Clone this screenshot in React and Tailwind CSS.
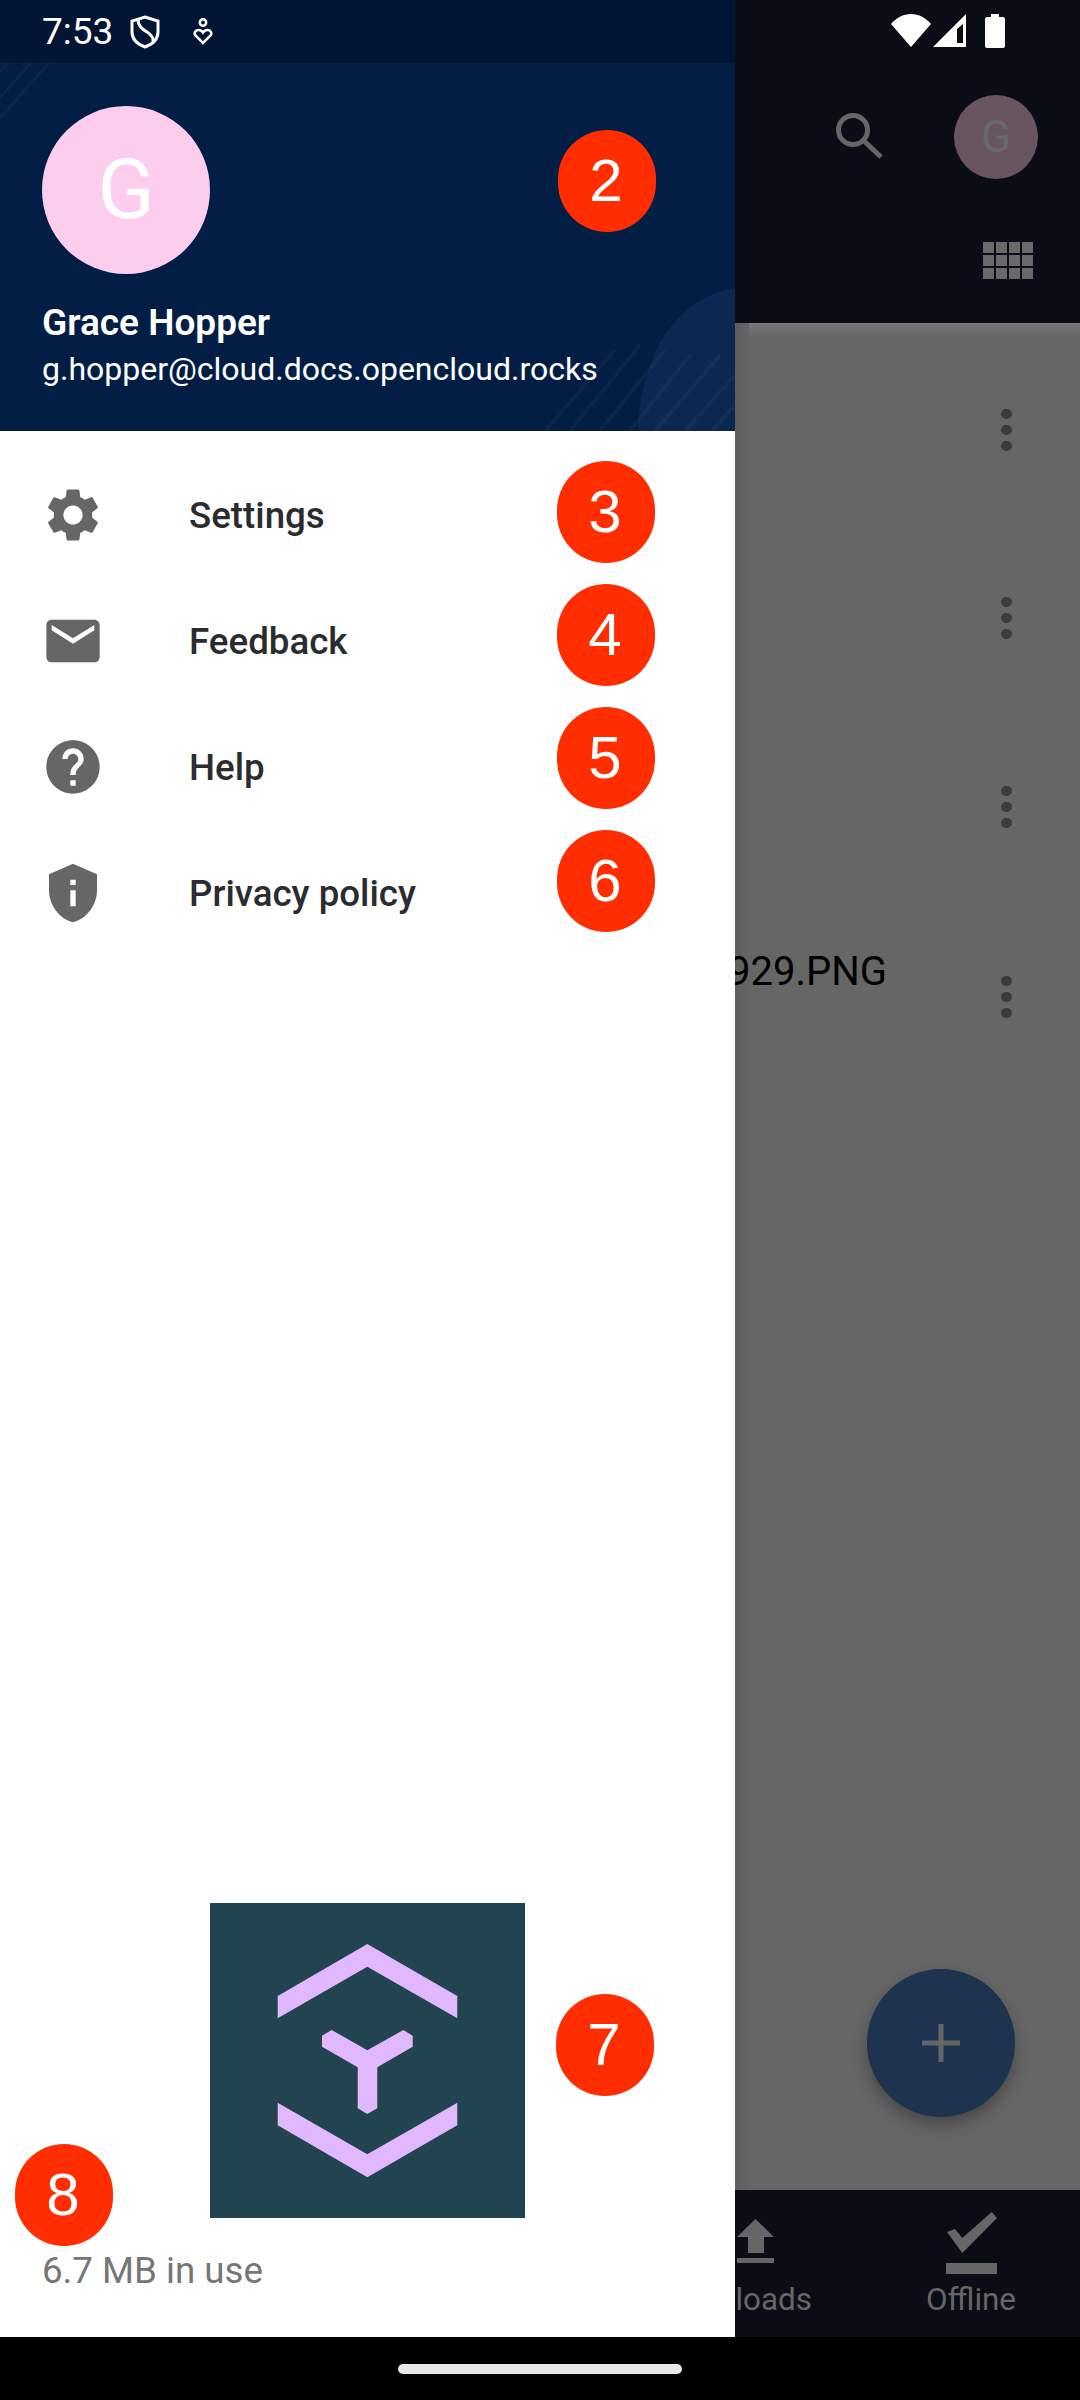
import React from "react";

const font = "font-['Roboto',sans-serif]";

const Badge = ({ n, className }) => (
  <div
    className={`absolute flex h-[102px] w-[98px] items-center justify-center rounded-full bg-[#ff2d00] text-[60px] text-white font-['Liberation_Sans',sans-serif] ${className}`}
  >
    <span className="-ml-[2px]">{n}</span>
  </div>
);

const MenuRow = ({ label, children }) => (
  <div className="flex h-[126px] items-center">
    <div className="ml-[37px] flex h-[72px] w-[72px] items-center justify-center">{children}</div>
    <span className="ml-[80px] mt-[2px] text-[36.7px] font-medium text-[#2a2c2f]">{label}</span>
  </div>
);

const Logo = () => (
  <svg width="315" height="315" viewBox="0 0 315 315" className="block">
    <rect width="315" height="315" fill="#224350" />
    <path fill="#e2b8fc" d="M157.3 41L247.3 93V115.3L157.3 63.7L67.7 115.3V93Z" />
    <path fill="#e2b8fc" d="M67.7 199.7L157.3 251.3L247.3 199.7V222.3L157.3 274.3L67.7 222.3Z" />
    <path
      fill="#e2b8fc"
      d="M121.7 127L157.3 147.3L193.3 127L202.7 132.7V143.7L167.3 164.3V205.3L157.3 211L147.7 205.3V164.3L112 143.7V132.7Z"
    />
  </svg>
);

const Kebab = () => (
  <div className="flex h-[42px] w-[11px] flex-col justify-between">
    <div className="h-[10px] w-[11px] rounded-full bg-[#3c3c3c]" />
    <div className="h-[10px] w-[11px] rounded-full bg-[#3c3c3c]" />
    <div className="h-[10px] w-[11px] rounded-full bg-[#3c3c3c]" />
  </div>
);

const Drawer = () => (
  <div className="relative flex w-[735px] flex-col bg-white">
    {/* Header */}
    <div className="relative h-[431px] overflow-hidden bg-[#031e45]">
      <svg width="735" height="431" viewBox="0 0 735 431" className="absolute left-0 top-0">
        <path
          d="M0 30L26 0M0 50L44 0M0 72L62 0M0 98L72 16M0 118L50 62"
          stroke="#ffffff"
          strokeOpacity="0.035"
          strokeWidth="3"
        />
        <path d="M638 431C640 370 665 300 735 288V431Z" fill="#0a2851" />
        <path
          d="M545 431L615 350M570 431L640 345M600 431L665 350M630 431L690 355M655 431L720 355M685 431L735 375M712 431L735 405"
          stroke="#ffffff"
          strokeOpacity="0.035"
          strokeWidth="4"
        />
      </svg>
      <div className="relative flex h-[63px] items-center bg-[#021433]/90 pl-[42px] text-white">
        <span className="text-[37px] leading-none">7:53</span>
        <svg width="30" height="34" viewBox="0 0 30 34" className="ml-[17px]" fill="none" stroke="#fff" strokeWidth="3">
          <path d="M15 2L28 6V17C28 25 23 29 15 32C7 29 2 25 2 17V6Z" />
          <path d="M8 4C8 11 12 14 17 17C22 20 24 23 23 28" />
        </svg>
        <svg width="20" height="27" viewBox="0 0 20 27" className="ml-[33px]" fill="none" stroke="#fff" strokeWidth="2.5">
          <circle cx="10" cy="4.5" r="3.2" />
          <path d="M10 25L2.5 17.5C0.5 15 2.5 12 5.5 12C7.5 12 9 13 10 14.5C11 13 12.5 12 14.5 12C17.5 12 19.5 15 17.5 17.5Z" />
        </svg>
      </div>
      <div className="relative ml-[42px] mt-[43px] flex h-[168px] w-[168px] items-center justify-center rounded-full bg-[#fdcdee] text-[84px] text-white">
        G
      </div>
      <div className="relative ml-[42px] mt-[27px] text-[37px] font-semibold leading-[44px] text-white">Grace Hopper</div>
      <div className="relative ml-[42px] mt-[4px] text-[32px] leading-[40px] text-white">g.hopper@cloud.docs.opencloud.rocks</div>
    </div>

    {/* Menu */}
    <div className="pt-[21px]">
      <MenuRow label="Settings">
        <svg width="64" height="64" viewBox="0 0 24 24" fill="#666666">
          <path d="M19.14 12.94c.04-.3.06-.61.06-.94 0-.32-.02-.64-.07-.94l2.03-1.58a.49.49 0 0 0 .12-.61l-1.92-3.32a.488.488 0 0 0-.59-.22l-2.39.96c-.5-.38-1.03-.7-1.62-.94l-.36-2.54a.484.484 0 0 0-.48-.41h-3.84c-.24 0-.43.17-.47.41l-.36 2.54c-.59.24-1.13.57-1.62.94l-2.39-.96c-.22-.08-.47 0-.59.22L2.74 8.87c-.12.21-.08.47.12.61l2.03 1.58c-.05.3-.09.63-.09.94s.02.64.07.94l-2.03 1.58a.49.49 0 0 0-.12.61l1.92 3.32c.12.22.37.29.59.22l2.39-.96c.5.38 1.03.7 1.62.94l.36 2.54c.05.24.24.41.48.41h3.84c.24 0 .44-.17.47-.41l.36-2.54c.59-.24 1.13-.56 1.62-.94l2.39.96c.22.08.47 0 .59-.22l1.92-3.32c.12-.22.07-.47-.12-.61l-2.01-1.58zM12 15.6c-1.98 0-3.6-1.62-3.6-3.6s1.62-3.6 3.6-3.6 3.6 1.62 3.6 3.6-1.62 3.6-3.6 3.6z" />
        </svg>
      </MenuRow>
      <MenuRow label="Feedback">
        <svg width="64" height="64" viewBox="0 0 24 24" fill="#666666">
          <path d="M20 4H4c-1.1 0-1.99.9-1.99 2L2 18c0 1.1.9 2 2 2h16c1.1 0 2-.9 2-2V6c0-1.1-.9-2-2-2zm0 4l-8 5-8-5V6l8 5 8-5v2z" />
        </svg>
      </MenuRow>
      <MenuRow label="Help">
        <svg width="64" height="64" viewBox="0 0 24 24" fill="#666666">
          <path d="M12 2C6.48 2 2 6.48 2 12s4.48 10 10 10 10-4.48 10-10S17.52 2 12 2zm1 17h-2v-2h2v2zm2.07-7.75l-.9.92C13.45 12.9 13 13.5 13 15h-2v-.5c0-1.1.45-2.1 1.17-2.83l1.24-1.26c.37-.36.59-.86.59-1.41 0-1.1-.9-2-2-2s-2 .9-2 2H8c0-2.21 1.79-4 4-4s4 1.79 4 4c0 .88-.36 1.68-.93 2.25z" />
        </svg>
      </MenuRow>
      <MenuRow label="Privacy policy">
        <svg width="64" height="64" viewBox="0 0 24 24" fill="#666666">
          <path d="M12 1L3 5v6c0 5.55 3.84 10.74 9 12 5.16-1.26 9-6.45 9-12V5l-9-4zm1 16h-2v-6h2v6zm0-8h-2V7h2v2z" />
        </svg>
      </MenuRow>
    </div>

    {/* Footer */}
    <div className="mt-auto flex flex-col items-center">
      <Logo />
    </div>
    <div className="mt-[33px] h-[86px] pl-[42px] text-[36.7px] leading-[40px] text-[#747775]">6.7 MB in use</div>
  </div>
);

const Backdrop = () => (
  <div className="relative flex w-[345px] flex-col overflow-hidden">
    <div className="relative h-[323px] bg-[#0b0d16]">
      <div className="flex h-[63px] items-start pt-[14px]">
        <svg width="40" height="33" viewBox="0 0 40 33" className="ml-[156px]" fill="#fff">
          <path d="M20 33L0 10C5 4 12 0 20 0C28 0 35 4 40 10Z" />
        </svg>
        <svg width="33" height="33" viewBox="0 0 33 33" className="ml-[2px]" fill="#fff">
          <path fillRule="evenodd" d="M33 0V33H0ZM24 15V29H30V10Z" />
        </svg>
        <svg width="20" height="34" viewBox="0 0 20 34" className="ml-[19px]" fill="#fff">
          <path d="M6 0H14V3H18C19 3 20 4 20 5V32C20 33 19 34 18 34H2C1 34 0 33 0 32V5C0 4 1 3 2 3H6Z" />
        </svg>
      </div>
      <div className="mt-[32px] flex items-center">
        <svg width="47" height="46" viewBox="0 0 47 46" className="ml-[101px] -mt-[3px]" fill="none" stroke="#666666" strokeWidth="5">
          <circle cx="17" cy="17" r="14.5" />
          <path d="M27 27L45 44" />
        </svg>
        <div className="ml-[71px] flex h-[84px] w-[84px] items-center justify-center rounded-full bg-[#685560] text-[44px] text-[#696969]">
          G
        </div>
      </div>
      <div className="ml-[248px] mt-[63px] grid w-[50px] grid-cols-4 gap-[2px]">
        {Array.from({ length: 12 }).map((_, i) => (
          <div key={i} className="h-[11px] bg-[#696969]" />
        ))}
      </div>
    </div>

    <div className="relative flex-1 bg-[#666666]">
      <div className="absolute left-0 right-0 top-0 h-[14px] bg-gradient-to-b from-[#7a7a7a] to-[#666666]" />
      <div className="absolute bottom-0 left-0 top-0 w-[14px] bg-gradient-to-r from-[#5e5e5e] to-[#666666]" />
      <div className="pl-[266px] pt-[86px]">
        <Kebab />
      </div>
      <div className="pl-[266px] pt-[146px]">
        <Kebab />
      </div>
      <div className="pl-[266px] pt-[147px]">
        <Kebab />
      </div>
      <div className="relative flex items-start">
        <div className="flex w-[152px] justify-end pt-[120px]">
          <span className="whitespace-nowrap text-[40px] leading-[48px] text-black">929.PNG</span>
        </div>
        <div className="ml-[114px] pt-[148px]">
          <Kebab />
        </div>
      </div>
      <div className="absolute bottom-[73px] left-[132px] flex h-[148px] w-[148px] items-center justify-center rounded-full bg-[#1e3350] shadow-[0_8px_16px_rgba(0,0,0,0.3)]">
        <svg width="38" height="38" viewBox="0 0 38 38" stroke="#666666" strokeWidth="5">
          <path d="M19 0V38M0 19H38" />
        </svg>
      </div>
    </div>

    <div className="flex h-[147px] bg-[#0b0d16] text-[31.4px] text-[#666666]">
      <div className="flex w-[77px] flex-col items-end">
        <svg width="37" height="44" viewBox="0 0 37 44" className="ml-[2px] mt-[29px] self-start" fill="#666666">
          <path d="M18.5 0L37 18H27V34H11V18H0ZM0 39H37V44H0Z" />
        </svg>
        <span className="mt-[17px] leading-[40px]">loads</span>
      </div>
      <div className="ml-[114px] flex w-[90px] flex-col items-center">
        <svg width="51" height="62" viewBox="0 0 51 62" className="mt-[22px]" fill="#666666">
          <path d="M45.7 0L51 6L16.3 41L1 20L9 17L16.3 26ZM0 51H51V62H0Z" />
        </svg>
        <span className="mt-[6px] leading-[40px]">Offline</span>
      </div>
    </div>
  </div>
);

export default function App() {
  return (
    <div className={`relative flex h-[2400px] w-[1080px] flex-col overflow-hidden bg-black ${font}`}>
      <div className="flex h-[2337px]">
        <Drawer />
        <Backdrop />
      </div>
      <div className="flex flex-1 justify-center pt-[27px]">
        <div className="h-[10px] w-[284px] rounded-full bg-[#e8e8e8]" />
      </div>

      <Badge n="2" className="left-[558px] top-[130px]" />
      <Badge n="3" className="left-[557px] top-[461px]" />
      <Badge n="4" className="left-[557px] top-[584px]" />
      <Badge n="5" className="left-[557px] top-[707px]" />
      <Badge n="6" className="left-[557px] top-[830px]" />
      <Badge n="7" className="left-[556px] top-[1994px]" />
      <Badge n="8" className="left-[15px] top-[2144px]" />
    </div>
  );
}
